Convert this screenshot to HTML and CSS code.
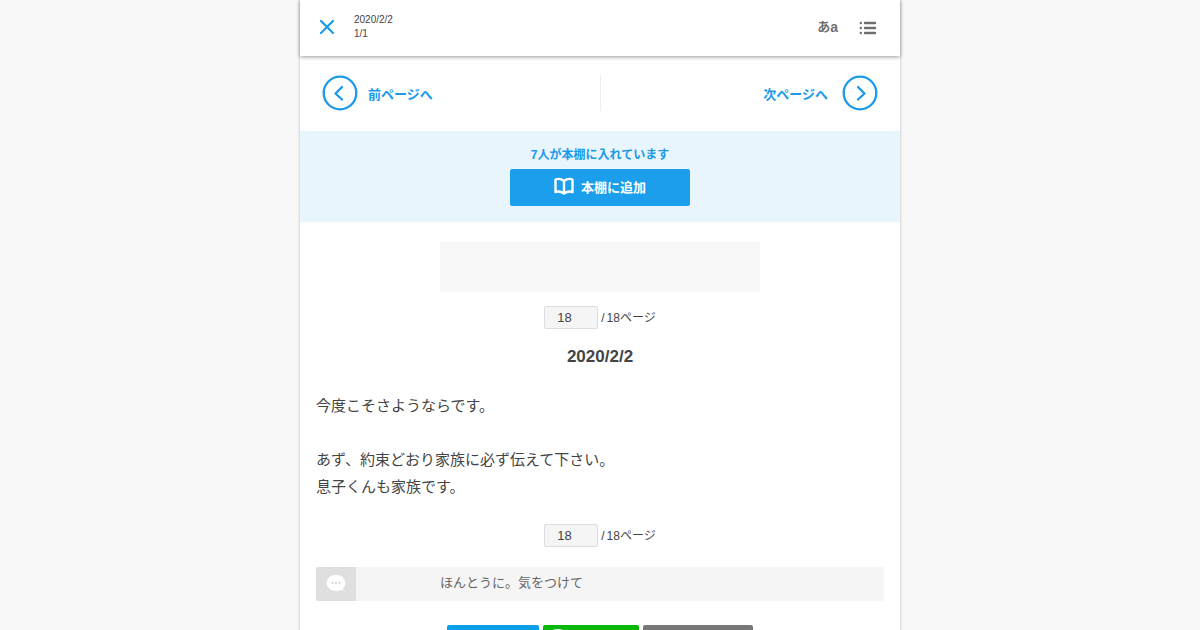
FILE: index.html
```
<!DOCTYPE html>
<html lang="ja">
<head>
    <meta charset="UTF-8">
    <meta name="viewport" content="width=device-width, initial-scale=1.0">
    <title>2020/2/2</title>
    <link rel="stylesheet" href="styles.css">
</head>
<body>
    <div class="wrapper">
        <header class="header">
            <button class="icon-button" type="button" aria-label="閉じる">
                <svg width="16" height="16" viewBox="0 0 16 16"><path d="M2 2l12 12M14 2L2 14" fill="none" stroke="#1b9aea" stroke-width="2.2" stroke-linecap="round"/></svg>
            </button>
            <div class="header-title">
                <p>2020/2/2</p>
                <p>1/1</p>
            </div>
            <button class="font-button" type="button">あ<span>a</span></button>
            <button class="icon-button" type="button" aria-label="目次">
                <svg width="18" height="16" viewBox="0 0 18 16" fill="none" stroke="#6f6f6f" stroke-width="2.4" stroke-linecap="round"><path d="M6 4h10M6 9h10M6 14h10M1.8 4h.01M1.8 9h.01M1.8 14h.01"/></svg>
            </button>
        </header>

        <nav class="pager">
            <a class="pager-link" href="#prev">
                <svg width="36" height="36" viewBox="0 0 36 36" fill="none" stroke="#1b9aea" stroke-width="2.3" stroke-linecap="round" stroke-linejoin="round"><circle cx="18" cy="18" r="16.3"/><path d="M20 12l-6.500 6.500 6.500 6"/></svg>
                <span>前ページへ</span>
            </a>
            <a class="pager-link next" href="#next">
                <span>次ページへ</span>
                <svg width="36" height="36" viewBox="0 0 36 36" fill="none" stroke="#1b9aea" stroke-width="2.3" stroke-linecap="round" stroke-linejoin="round"><circle cx="18" cy="18" r="16.3"/><path d="M16 12l6.500 6.500-6.500 6"/></svg>
            </a>
        </nav>

        <section class="bookshelf">
            <p>7人が本棚に入れています</p>
            <button class="add-button" type="button">
                <svg width="20" height="20" viewBox="0 0 20 20" fill="none" stroke="#fff" stroke-width="2.4" stroke-linejoin="round"><path d="M10 4Q6 .8 1.500 2.500v12.500Q6 13.500 10 16.500Q14 13.500 18.500 15V2.500Q14 .8 10 4zM10 4v12"/></svg>
                <span>本棚に追加</span>
            </button>
        </section>

        <main class="content">
            <div class="banner"></div>

            <form class="page-form">
                <input type="text" id="page-top" value="18">
                <label for="page-top">/<span>18ページ</span></label>
            </form>

            <h1>2020/2/2</h1>

            <div class="body-text">
                今度こそさようならです。<br>
                <br>
                あず、約束どおり家族に必ず伝えて下さい。<br>
                息子くんも家族です。
            </div>

            <form class="page-form">
                <input type="text" id="page-bottom" value="18">
                <label for="page-bottom">/<span>18ページ</span></label>
            </form>

            <div class="comment">
                <div class="comment-icon">
                    <svg width="20" height="18" viewBox="0 0 20 18"><path d="M10 0C4.800 0 .8 3.400.8 8s4 8 9.200 8c2 0 3.800-.4 5.300-1.200l2 1.500-.3-3c1.400-1.400 2.200-3.200 2.200-5.300C19.200 3.400 15.200 0 10 0z" fill="#fff"/><circle cx="6.500" cy="8" r=".9" fill="#ccc"/><circle cx="10" cy="8" r=".9" fill="#ccc"/><circle cx="13.500" cy="8" r=".9" fill="#ccc"/></svg>
                </div>
                <p>ほんとうに。気をつけて</p>
            </div>

            <div class="share">
                <button class="share-button twitter" type="button" aria-label="Twitter"></button>
                <button class="share-button line" type="button" aria-label="LINE">
                    <svg width="20" height="18" viewBox="0 0 20 18"><path d="M10 0C4.500 0 0 3.500 0 8c0 4 3.500 7 8.500 7.700.8.100.3 1.800.5 2.300C13 16.500 20 13 20 8c0-4.500-4.500-8-10-8z" fill="#fff"/></svg>
                </button>
                <button class="share-button copy" type="button" aria-label="URLをコピー"></button>
            </div>
        </main>
    </div>
</body>
</html>
```

FILE: styles.css
```
* {
    box-sizing: border-box;
}
body {
    margin: 0;
    background: #f8f8f8;
    color: #444;
    font-family: "Liberation Sans", "Noto Sans CJK JP", sans-serif;
    font-size: 13px;
}
p, h1 {
    margin: 0;
}
button {
    border: none;
    padding: 0;
    background: none;
    font-family: inherit;
    cursor: pointer;
}
svg {
    display: block;
    flex-shrink: 0;
}
.wrapper {
    max-width: 600px;
    min-height: 100vh;
    margin: 0 auto;
    background: #fff;
    box-shadow: 0 0 3px rgba(0,0,0,0.25);
}

/* ヘッダー */
.header {
    display: flex;
    align-items: center;
    height: 56px;
    padding: 0 16px 2px 11px;
    background: #fff;
    box-shadow: 0 1px 4px rgba(0,0,0,0.4);
}
.icon-button {
    display: flex;
    justify-content: center;
    width: 32px;
}
.header-title {
    flex: 1;
    padding-left: 11px;
    font-size: 10px;
    line-height: 14px;
}
.font-button {
    margin-right: 14px;
    color: #6f6f6f;
    font-size: 13px;
    line-height: 20px;
    font-weight: bold;
}
.font-button span {
    font-size: 14px;
    vertical-align: -1px;
}

/* 前後ページ */
.pager {
    display: flex;
    padding: 19px 22px 20px;
}
.pager-link {
    display: flex;
    flex: 1;
    align-items: center;
    gap: 10px;
    height: 36px;
    color: #1b9aea;
    font-weight: bold;
    text-decoration: none;
}
.next {
    justify-content: flex-end;
    gap: 14px;
    border-left: 1px solid #eee;
}

/* 本棚 */
.bookshelf {
    display: flex;
    flex-direction: column;
    align-items: center;
    gap: 5px;
    padding: 15px 16px 16px;
    background: #e8f5fd;
    color: #1b9aea;
    font-size: 12px;
    line-height: 18px;
    font-weight: bold;
}
.add-button {
    display: flex;
    align-items: center;
    justify-content: center;
    gap: 7px;
    width: 180px;
    height: 37px;
    padding-bottom: 2px;
    border-radius: 2px;
    background: #1b9fec;
    color: #fff;
    font-size: 13px;
    font-weight: bold;
}

/* 本文 */
.content {
    padding: 20px 16px;
}
.banner {
    max-width: 320px;
    height: 50px;
    margin: 0 auto 14px;
    background: #f8f8f8;
}
.page-form {
    display: flex;
    align-items: center;
    justify-content: center;
    gap: 3px;
    height: 23px;
    font-size: 12px;
}
.page-form input {
    width: 54px;
    height: 23px;
    padding: 0 12px;
    border: 1px solid #ddd;
    border-radius: 2px;
    background: #f5f5f5;
    color: #444;
    font-family: inherit;
    font-size: 13px;
}
.page-form label {
    padding-top: 2px;
    line-height: 23px;
}
.page-form label span {
    margin-left: 2px;
}
h1 {
    margin: 15px 0 22px;
    font-size: 17px;
    line-height: 26px;
    text-align: center;
}
.body-text {
    margin-bottom: 24px;
    font-size: 15px;
    line-height: 27px;
}
.comment {
    display: flex;
    align-items: center;
    height: 34px;
    margin: 20px 0 24px;
    border-radius: 2px;
    background: #f5f5f5;
    color: #666;
    line-height: 18px;
    overflow: hidden;
}
.comment-icon {
    display: flex;
    align-items: center;
    justify-content: center;
    width: 40px;
    height: 34px;
    background: #dfdfdf;
}
.comment p {
    padding: 0 0 2px 84px;
}

/* シェア */
.share {
    display: flex;
    justify-content: center;
    gap: 4px;
}
.share-button {
    width: 92px;
    height: 28px;
    border-radius: 2px;
}
.twitter {
    background: #0b9fe8;
}
.line {
    display: flex;
    align-items: flex-start;
    width: 96px;
    padding: 4px 5px;
    background: #0ab80a;
}
.copy {
    width: 110px;
    background: #777;
}
```
